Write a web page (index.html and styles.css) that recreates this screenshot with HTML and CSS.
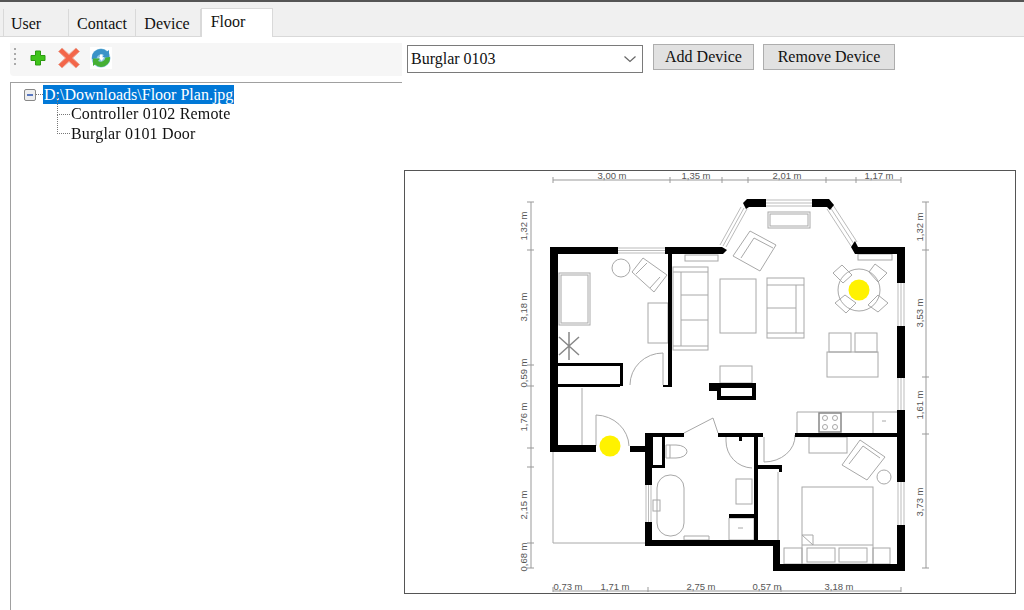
FILE: index.html
```html
<!DOCTYPE html>
<html lang="en">
<head>
    <meta charset="UTF-8">
    <title>Floor</title>
    <link rel="stylesheet" href="styles.css">
</head>
<body>
    <div class="tabs">
        <div class="tab tab-user">User</div>
        <div class="tab tab-contact">Contact</div>
        <div class="tab tab-device">Device</div>
        <div class="tab tab-floor">Floor</div>
    </div>

    <div class="page">
        <div class="left">
            <div class="toolbar">
                <span class="grip"></span>
                <svg class="tool-icon icon-add" width="18" height="18" viewBox="0 0 18 18">
                    <path d="M6.500 2h5v4.500H16v5h-4.500V16h-5v-4.500H2v-5h4.500z" fill="#3fc41a" stroke="#2c9a12"/>
                </svg>
                <svg class="tool-icon icon-del" width="24" height="24" viewBox="0 0 24 24">
                    <path d="M5 2 12 8.500 19 2 22.500 5.500 15.500 12 22.500 18.500 19 22 12 15.500 5 22 1.500 18.500 8.500 12 1.500 5.500z" fill="#f3664a" stroke="#eba898"/>
                </svg>
                <svg class="tool-icon icon-ref" width="22" height="22" viewBox="0 0 22 22">
                    <rect width="22" height="22" fill="#fff"/>
                    <circle cx="11" cy="11" r="9.500" fill="#8fc7e4"/>
                    <path d="M2 12a9 9 0 0 1 15-7.500l2-1.500v7.500h-7l2-2.500a5 5 0 0 0-7.500 3.500z" fill="#3a93c8"/>
                    <path d="M20 10a9 9 0 0 1-15 7.500l-2 1.500v-7.500h7l-2 2.500a5 5 0 0 0 7.500-3.500z" fill="#45b035"/>
                    <path d="M10 7.500h2.500v3l2-.5-3 4-3-4 1.500.5z" fill="#fff"/>
                </svg>
            </div>
            <div class="tree">
                <div class="node root">
                    <span class="expander"></span>
                    <span class="root-dots"></span>
                    <span class="selected">D:\Downloads\Floor Plan.jpg</span>
                </div>
                <div class="node child"><span class="child-dots"></span>Controller 0102 Remote</div>
                <div class="node child"><span class="child-dots"></span>Burglar 0101 Door</div>
            </div>
        </div>

        <div class="right">
            <div class="controls">
                <div class="combo">
                    <span>Burglar 0103</span>
                    <svg width="14" height="8" viewBox="0 0 14 8"><path d="M1.500 1.500 7 6.500 12.500 1.500" fill="none" stroke="#666" stroke-width="1.200"/></svg>
                </div>
                <button class="btn btn-add">Add Device</button>
                <button class="btn btn-remove">Remove Device</button>
            </div>

            <div class="plan">
                <svg class="plan-svg" width="610" height="422" viewBox="405 171 610 422">
                    <!-- dimension lines -->
                    <path class="dim" d="M553 180H901M553 177v6M670 177v6M722 177v6M748 177v6M826 177v6M856 177v6M901 177v6"/>
                    <path class="dim" d="M531 202V568M527 202h7M527 250h7M527 365h7M527 386h7M527 448h7M527 467h7M527 543h7M527 568h7"/>
                    <path class="dim" d="M926 202V568M922 202h7M922 250h7M922 377h7M922 434h7M922 568h7"/>
                    <path class="dim" d="M553 591H901M553 587v5M648 587v5M781 587v5M901 587v5"/>
                    <g class="dim-text">
                        <text x="612" y="179" text-anchor="middle">3,00 m</text>
                        <text x="696" y="179" text-anchor="middle">1,35 m</text>
                        <text x="787" y="179" text-anchor="middle">2,01 m</text>
                        <text x="879" y="179" text-anchor="middle">1,17 m</text>
                        <text x="568" y="590" text-anchor="middle">0,73 m</text>
                        <text x="615" y="590" text-anchor="middle">1,71 m</text>
                        <text x="701" y="590" text-anchor="middle">2,75 m</text>
                        <text x="767" y="590" text-anchor="middle">0,57 m</text>
                        <text x="839" y="590" text-anchor="middle">3,18 m</text>
                        <text transform="translate(527 226) rotate(-90)" text-anchor="middle">1,32 m</text>
                        <text transform="translate(527 307) rotate(-90)" text-anchor="middle">3,18 m</text>
                        <text transform="translate(527 373) rotate(-90)" text-anchor="middle">0,59 m</text>
                        <text transform="translate(527 417) rotate(-90)" text-anchor="middle">1,76 m</text>
                        <text transform="translate(527 505) rotate(-90)" text-anchor="middle">2,15 m</text>
                        <text transform="translate(527 557) rotate(-90)" text-anchor="middle">0,68 m</text>
                        <text transform="translate(923 227) rotate(-90)" text-anchor="middle">1,32 m</text>
                        <text transform="translate(923 313) rotate(-90)" text-anchor="middle">3,53 m</text>
                        <text transform="translate(923 405) rotate(-90)" text-anchor="middle">1,61 m</text>
                        <text transform="translate(923 502) rotate(-90)" text-anchor="middle">3,73 m</text>
                    </g>

                    <!-- windows -->
                    <g class="win">
                        <path d="M618 248h47M618 250.500h47M618 253h47"/>
                        <path d="M766 200h46M766 203h46M766 206h46"/>
                        <path d="M741 207 720 245M744 208 723 246M747 209 726 247"/>
                        <path d="M827 209 851 246M830 207 854 244M833 205 857 242"/>
                        <path d="M898 283v43M901 283v43M904 283v43"/>
                        <path d="M898 378v32M901 378v32M904 378v32"/>
                        <path d="M898 482v43M901 482v43M904 482v43"/>
                        <path d="M646 485v37M648.500 485v37M651 485v37"/>
                    </g>

                    <!-- doors and furniture -->
                    <g class="fur">
                        <path d="M596 415v31M596 415A34 32 0 0 1 629 446"/>
                        <path d="M630 385A33 32 0 0 1 663 353V385"/>
                        <path d="M684 433 713 418 718 433"/>
                        <path d="M764 437V462A31 26 0 0 0 795 435"/>
                        <path d="M726 437v4a27 27 0 0 0 26 27"/>
                        <path d="M553 452V543H645"/>
                        <path d="M582 388V445"/>
                        <path d="M778 472V541"/>
                        <rect x="559" y="273" width="31" height="52"/>
                        <rect x="561" y="275" width="27" height="48"/>
                        <rect x="648" y="303" width="20" height="40"/>
                        <circle cx="621" cy="268" r="9"/>
                        <path d="M643 258 667 275 654 292 632 272zM647 263 636 274M660 277 650 288"/>
                        <path class="fur-dark" d="M569 332V360M559 337 579 355M579 337 559 355"/>
                        <rect x="673" y="267" width="35" height="83"/>
                        <path d="M673 272h35M673 346h35M681 272v74M681 295h27M681 320h27"/>
                        <rect x="685" y="255" width="33" height="6"/>
                        <rect x="720" y="279" width="36" height="54"/>
                        <rect x="767" y="278" width="37" height="60"/>
                        <path d="M767 285h37M796 285v48M767 308h29M767 333h37"/>
                        <rect x="768" y="212" width="42" height="16"/>
                        <rect x="770" y="214" width="38" height="12"/>
                        <path d="M750 231 776 245 760 271 733 256zM754 238 773 248M754 238 741 258"/>
                        <rect x="858" y="254" width="34" height="6"/>
                        <circle cx="859" cy="290" r="21"/>
                        <path d="M833 273 842 265 852 275 843 283zM869 272 875 264 887 273 878 282zM835 303 846 313 856 303 845 295zM868 305 878 312 888 303 878 295z"/>
                        <rect x="827" y="352" width="51" height="25"/>
                        <rect x="829" y="333" width="22" height="19"/>
                        <rect x="855" y="333" width="22" height="19"/>
                        <rect x="720" y="366" width="32" height="17"/>
                        <path d="M797 412H897M797 412V433M873 412V433"/>
                        <rect class="fur-dark" x="819" y="413" width="22" height="19"/>
                        <circle cx="825" cy="418" r="2.500"/><circle cx="835" cy="418" r="2.500"/>
                        <circle cx="825" cy="427" r="2.500"/><circle cx="835" cy="427" r="2.500"/>
                        <path d="M882 421h4"/>
                        <rect x="809" y="437" width="38" height="16"/>
                        <path d="M860 440 885 457 867 480 842 465zM863 446 880 458M863 446 849 464"/>
                        <circle cx="884" cy="477" r="7"/>
                        <rect x="802" y="487" width="71" height="77"/>
                        <path d="M802 545H873M802 535H813V545z"/>
                        <rect x="784" y="548" width="18" height="16"/>
                        <rect x="873" y="548" width="17" height="16"/>
                        <rect x="807" y="548" width="28" height="14"/>
                        <rect x="839" y="548" width="28" height="14"/>
                        <rect x="657" y="475" width="27" height="61" rx="13"/>
                        <rect x="653" y="500" width="7" height="11"/>
                        <path d="M666 445h10a11 6.500 0 0 1 0 13h-10zM670 445v13"/>
                        <rect x="736" y="479" width="16" height="25"/>
                        <path d="M729 518h25v22h-25zM684 536h25v4h-25zM738 528h5"/>
                    </g>

                    <!-- walls -->
                    <g class="wall">
                        <path d="M550 247h68v7h-60v191h38v7h-46z"/>
                        <path d="M665 247H722L727 250 723 254H672V387H663V385H668V254H665z"/>
                        <path d="M743 203 747 199H766V207H749L746 209z"/>
                        <path d="M812 199H829L834 205 830 210 827 207H812z"/>
                        <path d="M855 241 851 247 855 254H897V283H905V247H858z"/>
                        <path d="M897 326h8v52h-8zM897 410h8v72h-8z"/>
                        <path d="M795 433H897V437H795z"/>
                        <path d="M897 525h8v46H773V541h7v23H897z"/>
                        <path d="M557 363H623V386H620V366H557zM557 384H620V387H557z"/>
                        <path fill-rule="evenodd" d="M709 383H756V400H717V391H709zM721 388V396H752V388z"/>
                        <path d="M630 446H645V433H684V437H653V465H662V437H665V468H652V485H645V452H630z"/>
                        <path d="M645 522H652V540H754V433H718V437H754V433H763V437H758V465H782V472H779V469H758V540H780V546H645z"/>
                        <path d="M729 514H754V518H729zM739 437H742V441H739z"/>
                    </g>

                    <circle class="pin" cx="859" cy="290" r="10.500"/>
                    <circle class="pin" cx="610" cy="446" r="10.500"/>
                </svg>
            </div>
        </div>
    </div>
</body>
</html>
```

FILE: styles.css
```css
html, body {
    margin: 0;
    height: 610px;
    overflow: hidden;
}
body {
    box-sizing: border-box;
    background: #fff;
    color: #111;
    font-family: "Liberation Serif", serif;
    font-size: 16px;
    border-top: 2px solid #555;
    filter: blur(0.5px);
}

/* tabs */
.tabs {
    display: flex;
    align-items: flex-end;
    height: 34px;
    padding-left: 3px;
    background: #f0f0f0;
    border-bottom: 1px solid #d9d9d9;
}
.tab {
    box-sizing: border-box;
    height: 27px;
    padding-top: 6px;
    background: #f0f0f0;
    border-right: 1px solid #d9d9d9;
    text-align: center;
}
.tab-user { width: 66px; padding-right: 20px; border-left: 1px solid #d9d9d9; }
.tab-contact { width: 67px; }
.tab-device { width: 65px; padding-right: 2px; }
.tab-floor {
    width: 72px;
    height: 29px;
    margin-bottom: -1px;
    padding-top: 4px;
    padding-right: 18px;
    background: #fff;
    border: 1px solid #d9d9d9;
    border-bottom: none;
}

.page {
    display: flex;
    height: 573px;
    padding-left: 10px;
}
.left {
    flex-shrink: 0;
    width: 392px;
    padding-top: 6px;
}
.right {
    flex: 1;
    padding-top: 7px;
}

/* toolbar */
.toolbar {
    display: flex;
    align-items: center;
    box-sizing: border-box;
    height: 33px;
    padding: 0 0 3px 4px;
    background: #f6f6f6;
    border-radius: 0 0 0 4px;
}
.grip {
    width: 2px;
    height: 20px;
    margin-right: 13px;
    background: repeating-linear-gradient(#aaa 0 2px, transparent 2px 5px);
}
.tool-icon {
    flex-shrink: 0;
}
.icon-del {
    margin-left: 10px;
}
.icon-ref {
    margin-left: 9px;
}

/* tree */
.tree {
    position: relative;
    height: 530px;
    margin-top: 6px;
    padding-top: 2px;
    border-top: 1px solid #a0a0a0;
    border-left: 1px solid #a0a0a0;
}
.node {
    display: flex;
    align-items: center;
    height: 19.500px;
    white-space: nowrap;
}
.root {
    padding-left: 13px;
}
.expander {
    box-sizing: border-box;
    width: 12px;
    height: 12px;
    border: 1px solid #888;
    border-radius: 2px;
    background: linear-gradient(#5a78c0, #5a78c0) center / 6px 2px no-repeat #eee;
}
.root-dots {
    width: 7px;
    border-top: 1px dotted #777;
}
.selected {
    padding: 0 1px;
    background: #0078d7;
    color: #fff;
    line-height: 19px;
}
.child {
    position: relative;
    padding-left: 60px;
    letter-spacing: 0.18px;
}
.child-dots {
    width: 13px;
    margin-left: -14px;
    margin-right: 1px;
    border-top: 1px dotted #777;
}
.child-dots::before {
    content: "";
    position: absolute;
    left: 46px;
    top: -10px;
    height: 20px;
    border-left: 1px dotted #777;
}

/* controls above the plan */
.controls {
    display: flex;
    align-items: flex-start;
    height: 126px;
    padding-left: 5px;
}
.combo {
    display: flex;
    align-items: center;
    justify-content: space-between;
    box-sizing: border-box;
    width: 236px;
    height: 28px;
    margin-top: 1px;
    padding: 0 5px 0 3px;
    background: #fff;
    border: 1px solid #7a7a7a;
}
.btn {
    box-sizing: border-box;
    height: 26px;
    padding: 0;
    background: #e1e1e1;
    border: 1px solid #adadad;
    color: #111;
    font-family: inherit;
    font-size: 16px;
}
.btn-add { width: 101px; margin-left: 10px; }
.btn-remove { width: 132px; margin-left: 9px; }

/* floor plan */
.plan {
    box-sizing: border-box;
    width: 612px;
    height: 424px;
    margin-left: 2px;
    border: 1px solid #555;
    background: #fff;
}
.plan-svg {
    display: block;
}
.dim {
    fill: none;
    stroke: #999;
    stroke-width: 1;
}
.dim-text {
    fill: #555;
    font-family: "Liberation Sans", sans-serif;
    font-size: 9.500px;
}
.win {
    fill: none;
    stroke: #bbb;
    stroke-width: 1;
}
.wall {
    fill: #000;
}
.fur {
    fill: none;
    stroke: #a8a8a8;
    stroke-width: 1;
}
.fur-dark {
    stroke: #888;
    stroke-width: 1.500;
}
.pin {
    fill: #fff200;
}
```
